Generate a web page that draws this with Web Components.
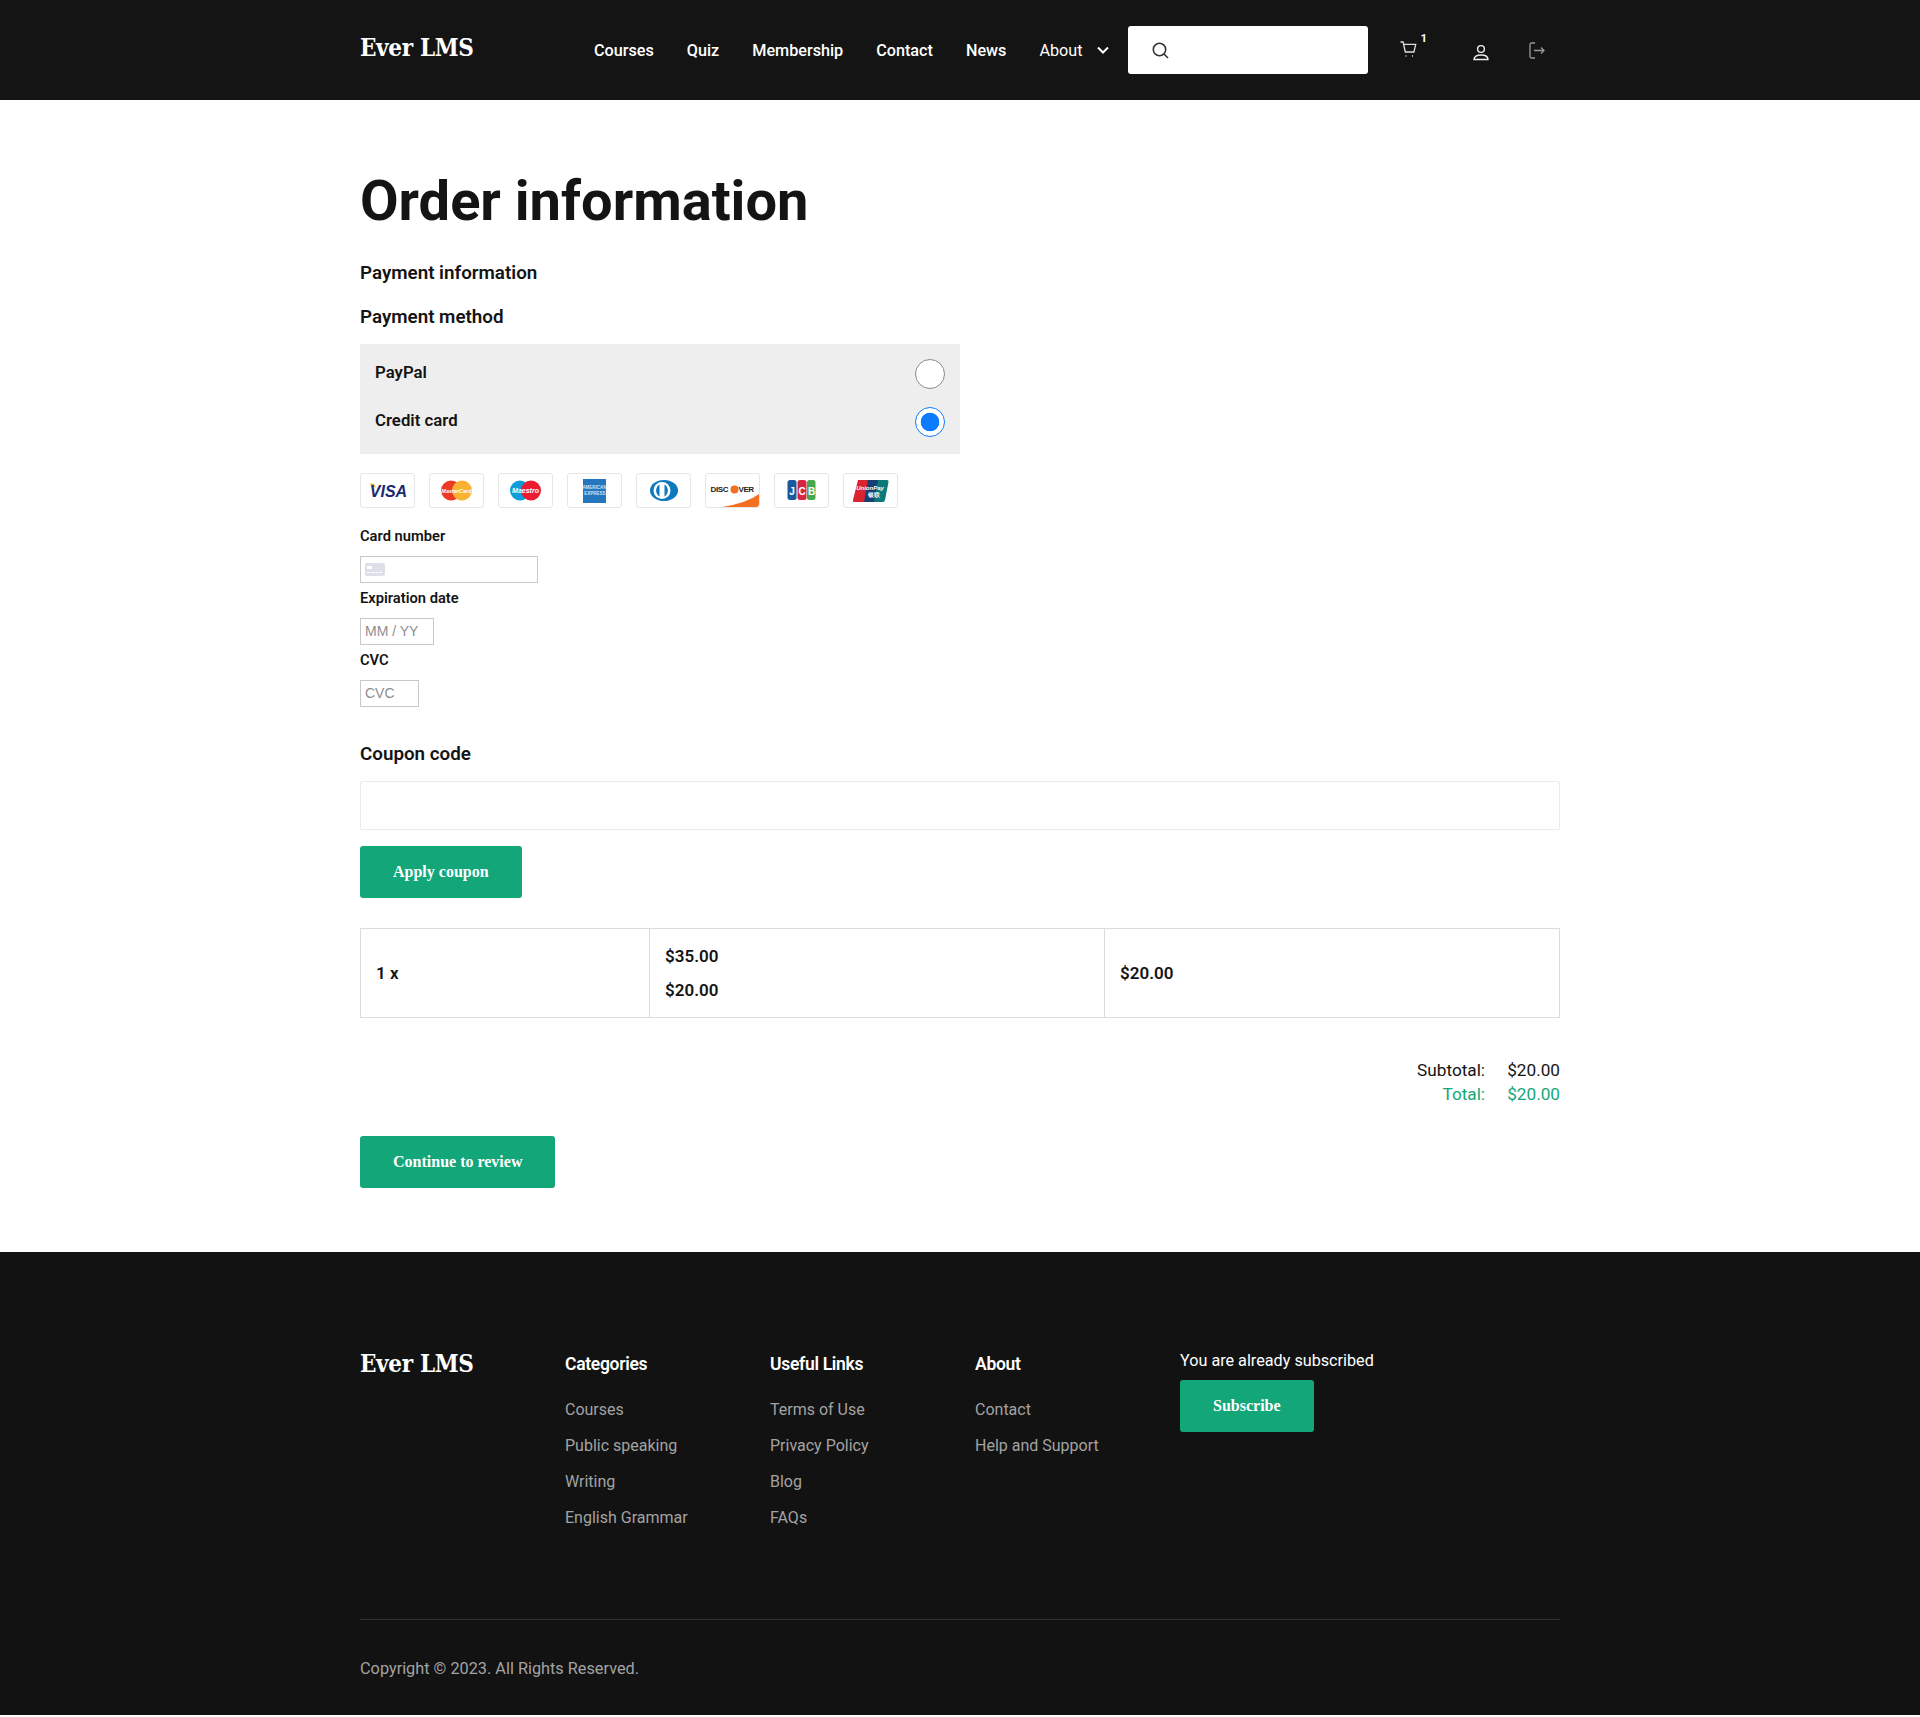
<!DOCTYPE html>
<html lang="en">
<head>
<meta charset="utf-8">
<title>Order information</title>
<style>
html, body { margin: 0; padding: 0; background: #fff; }
body { font-family: "Roboto", "Liberation Sans", sans-serif; color: #141414; padding-bottom: 2px; }
lms-header, lms-checkout, lms-footer { display: block; }
</style>
</head>
<body>
<lms-header></lms-header>
<lms-checkout></lms-checkout>
<lms-footer></lms-footer>

<script>
const SANS = '"Roboto", "Liberation Sans", sans-serif';
const SERIF = '"Liberation Serif", serif';
const SLAB = '"DejaVu Serif", "Liberation Serif", serif';

class LmsLogo extends HTMLElement {
    constructor() {
        super();
        this.attachShadow({ mode: 'open' });
        this.shadowRoot.innerHTML = `
            <style>
                :host { display: block; font: 700 24px/32px ${SLAB}; font-stretch: condensed; color: #fff; letter-spacing: -0.35px; }
            </style>
            Ever LMS`;
    }
}

class LmsHeader extends HTMLElement {
    constructor() {
        super();
        this.attachShadow({ mode: 'open' });
        const links = ['Courses', 'Quiz', 'Membership', 'Contact', 'News'];
        this.shadowRoot.innerHTML = `
            <style>
                :host { display: block; background: #141414; height: 100px; font-family: ${SANS}; }
                .inner { width: 1200px; height: 100px; margin: 0 auto; display: flex; align-items: center; }
                lms-logo { width: 234px; margin-top: -4px; }
                nav { display: flex; gap: 33px; align-items: center; color: #fff; font-size: 16.200px; font-weight: 500; }
                .about { display: flex; align-items: center; gap: 14px; font-weight: 400; }
                .search { width: 240px; height: 48px; background: #fff; border-radius: 3px; margin-left: 19px;
                    display: flex; align-items: center; padding-left: 24px; box-sizing: border-box; }
                .icons { display: flex; align-items: center; position: relative; }
                .cart { margin-left: 32px; position: relative; height: 18px; }
                .badge { position: absolute; left: 21px; top: -10px; font-size: 11.500px; font-weight: 700; color: #fff; }
                .user { margin-left: 56px; margin-top: 5px; }
                .out { margin-left: 40px; }
                svg { display: block; }
            </style>
            <div class="inner">
                <lms-logo></lms-logo>
                <nav>
                    ${links.map(l => `<span>${l}</span>`).join('')}
                    <span class="about">About
                        <svg width="12" height="8" viewBox="0 0 12 8" fill="none" stroke="#fff" stroke-width="2"><path d="M1 1.500l5 5 5-5"/></svg>
                    </span>
                </nav>
                <div class="search">
                    <svg width="17" height="17" viewBox="0 0 17 17" fill="none" stroke="#333" stroke-width="1.600"><circle cx="7.500" cy="7.500" r="6.200"/><path d="M12 12l4 4"/></svg>
                </div>
                <div class="icons">
                    <div class="cart">
                        <svg width="17" height="17" viewBox="0 0 17 17" fill="none" stroke="#ddd" stroke-width="1.300"><path d="M.5 1h2.600l2.200 10h8.600l1.800-7.600H3.700"/><path d="M5.500 15h1M12 15h1" stroke-width="1.600"/></svg>
                        <span class="badge">1</span>
                    </div>
                    <svg class="user" width="16" height="17" viewBox="0 0 16 17" fill="none" stroke="#eee" stroke-width="1.400"><circle cx="8" cy="5" r="3.400"/><path d="M1 15.500c0-3 3-4.500 7-4.500s7 1.500 7 4.500z"/></svg>
                    <svg class="out" width="16" height="17" viewBox="0 0 16 17" fill="none" stroke="#999" stroke-width="1.300"><path d="M6 1H2.500Q1 1 1 2.500v12Q1 16 2.500 16H6"/><path d="M5 8.500h10M12 5.500l3 3-3 3"/></svg>
                </div>
            </div>`;
    }
}

class LmsButton extends HTMLElement {
    constructor() {
        super();
        this.attachShadow({ mode: 'open' });
        this.shadowRoot.innerHTML = `
            <style>
                :host { display: inline-flex; height: 52px; align-items: center; padding: 0 33px; background: #13a679;
                    border-radius: 3px; color: #fff; font: 700 16px ${SERIF}; box-sizing: border-box; }
            </style>
            <slot></slot>`;
    }
}

class LmsRadio extends HTMLElement {
    constructor() {
        super();
        this.attachShadow({ mode: 'open' });
        this.shadowRoot.innerHTML = `
            <style>
                :host { display: flex; justify-content: space-between; align-items: center; height: 48px;
                    font-weight: 600; font-size: 16.800px; color: #141414; }
                .label { margin-top: -5px; }
                .dot { width: 30px; height: 30px; border-radius: 50%; background: #fff; border: 1px solid #8a8a8a; box-sizing: border-box; }
                :host([checked]) .dot { border-color: #0d7bff; background: radial-gradient(circle, #0d7bff 0 9px, #fff 9.600px); }
            </style>
            <span class="label"><slot></slot></span><span class="dot"></span>`;
    }
}

class LmsCardIcons extends HTMLElement {
    constructor() {
        super();
        this.attachShadow({ mode: 'open' });
        const t = 'font-family="Liberation Sans" font-weight="700"';
        const icons = [
            `<path d="M9 10.500l5 .3 2 4z" fill="#f7a823"/><text x="28.500" y="23.500" text-anchor="middle" ${t} font-style="italic" font-size="16" fill="#1a2a72">VISA</text>`,
            `<circle cx="22" cy="17.500" r="10" fill="#ec3a26"/><circle cx="33" cy="17.500" r="10" fill="#fbb231"/><text x="27.500" y="19.500" text-anchor="middle" ${t} font-style="italic" font-size="5.500" fill="#fff">MasterCard</text>`,
            `<circle cx="22" cy="17.500" r="10" fill="#0d9ddb"/><circle cx="33" cy="17.500" r="10" fill="#eb1c30"/><text x="27.500" y="20" text-anchor="middle" ${t} font-style="italic" font-size="7" fill="#fff">Maestro</text>`,
            `<rect x="16" y="6" width="23" height="24" fill="#2477bd"/><text x="27.500" y="16" text-anchor="middle" ${t} font-size="4.500" fill="#cfe2f2">AMERICAN</text><text x="28" y="22" text-anchor="middle" ${t} font-size="4.500" fill="#cfe2f2">EXPRESS</text>`,
            `<ellipse cx="28" cy="17.500" rx="14" ry="10.500" fill="#0f79bd"/><circle cx="26" cy="17.500" r="8.500" fill="#fff"/><path d="M23.500 11.500a7 7 0 0 0 0 12zM28.500 11.500a7 7 0 0 1 0 12z" fill="#0f79bd"/>`,
            `<path d="M17 34Q42 30 54 21v10q0 3-3 3z" fill="#f37021"/><text x="5.500" y="19" ${t} font-size="8" letter-spacing="-.4" fill="#222">DISC</text><circle cx="29.500" cy="16.500" r="4" fill="#f37021"/><text x="33.500" y="19" ${t} font-size="8" letter-spacing="-.4" fill="#222">VER</text>`,
            `<rect x="13.500" y="7" width="9" height="20" rx="2.500" fill="#1a5b9f"/><rect x="23.500" y="7" width="9" height="20" rx="2.500" fill="#d5263f"/><rect x="33" y="7" width="8.500" height="20" rx="2.500" fill="#46a84a"/><text x="18" y="22" text-anchor="middle" ${t} font-size="10" fill="#fff">J</text><text x="28" y="22" text-anchor="middle" ${t} font-size="10" fill="#fff">C</text><text x="37.500" y="22" text-anchor="middle" ${t} font-size="10" fill="#fff">B</text>`,
            `<path d="M15 7h13l-4 22H11q-1.500 0-1-2z" fill="#d9232e"/><path d="M25 7h13l-4 22H21z" fill="#163f73"/><path d="M35 7h9q2 0 1.500 2L42 27q-.5 2-2 2h-9z" fill="#0c7a78"/><text x="27" y="17" text-anchor="middle" ${t} font-style="italic" font-size="6" fill="#fff">UnionPay</text><text x="31" y="24" text-anchor="middle" ${t} font-size="5.500" fill="#fff">银联</text>`
        ];
        this.shadowRoot.innerHTML = `
            <style>
                :host { display: flex; gap: 14px; }
                svg { display: block; width: 55px; height: 35px; border: 1px solid #e6e6e6; border-radius: 3px; box-sizing: border-box; background: #fff; }
            </style>
            ${icons.map(i => `<svg viewBox="1 1 53 33">${i}</svg>`).join('')}`;
    }
}

class LmsField extends HTMLElement {
    constructor() {
        super();
        this.attachShadow({ mode: 'open' });
        this.shadowRoot.innerHTML = `
            <style>
                :host { display: block; }
                .label { display: block; font-size: 14.700px; font-weight: 600; line-height: 18px; margin-bottom: 11px; color: #141414; }
                .box { height: 27px; box-sizing: border-box; border: 1px solid #c8c8c8; display: flex; align-items: center;
                    padding: 0 0 2px 4px; font: 14px "Liberation Sans", sans-serif; color: #8e8e8e; }
            </style>
            <span class="label"></span>
            <div class="box"><slot></slot></div>`;
    }
    connectedCallback() {
        this.shadowRoot.querySelector('.label').textContent = this.getAttribute('label');
        this.shadowRoot.querySelector('.box').style.width = this.getAttribute('width') + 'px';
    }
}

class LmsCheckout extends HTMLElement {
    constructor() {
        super();
        this.attachShadow({ mode: 'open' });
        this.shadowRoot.innerHTML = `
            <style>
                :host { display: block; height: 1152px; box-sizing: border-box; font-family: ${SANS}; color: #141414; }
                .wrap { width: 1200px; margin: 0 auto; padding-top: 67px; }
                h1 { margin: 0; font-size: 56px; line-height: 68px; font-weight: 700; }
                h2 { margin: 0; font-size: 18.800px; line-height: 24px; font-weight: 600; }
                .pay { margin-top: 26px; }
                .method { margin-top: 20px; }
                .methods { width: 600px; height: 110px; box-sizing: border-box; background: #eee; margin-top: 15px;
                    padding: 6px 15px 0; display: flex; flex-direction: column; }
                lms-card-icons { margin-top: 19px; }
                .fields { margin-top: 19px; display: flex; flex-direction: column; gap: 6px; }
                .chip { display: block; margin-top: 2px; }
                .coupon-title { margin-top: 35px; }
                .coupon { height: 49px; border: 1px solid #ebebeb; border-radius: 2px; box-sizing: border-box; margin-top: 15px; }
                .apply { margin-top: 16px; }
                table { width: 1200px; height: 90px; margin-top: 30px; border-collapse: collapse; table-layout: fixed; font-size: 17px; font-weight: 600; }
                td { border: 1px solid #dcdcdc; padding: 0 15px; }
                td p { margin: 0; line-height: 34px; }
                .totals { margin-top: 40px; display: grid; grid-template-columns: auto 75px; justify-content: end; text-align: right;
                    font-size: 17.200px; line-height: 24px; font-weight: 400; }
                .green { color: #13a679; }
                .continue { margin-top: 30px; }
            </style>
            <div class="wrap">
                <h1>Order information</h1>
                <h2 class="pay">Payment information</h2>
                <h2 class="method">Payment method</h2>
                <div class="methods">
                    <lms-radio>PayPal</lms-radio>
                    <lms-radio checked>Credit card</lms-radio>
                </div>
                <lms-card-icons></lms-card-icons>
                <div class="fields">
                    <lms-field label="Card number" width="178">
                        <svg class="chip" width="20" height="13" viewBox="0 0 20 13"><rect width="20" height="13" rx="2" fill="#dde0e8"/><rect x="2" y="3" width="5" height="3" fill="#fff"/><path d="M2 9.500h16" stroke="#fff" stroke-dasharray="3 1"/></svg>
                    </lms-field>
                    <lms-field label="Expiration date" width="74">MM / YY</lms-field>
                    <lms-field label="CVC" width="59">CVC</lms-field>
                </div>
                <h2 class="coupon-title">Coupon code</h2>
                <div class="coupon"></div>
                <lms-button class="apply">Apply coupon</lms-button>
                <table>
                    <colgroup><col style="width:289px"><col style="width:455px"><col></colgroup>
                    <tr><td>1 x</td><td><p>$35.00</p><p>$20.00</p></td><td>$20.00</td></tr>
                </table>
                <div class="totals">
                    <span>Subtotal:</span><span>$20.00</span>
                    <span class="green">Total:</span><span class="green">$20.00</span>
                </div>
                <lms-button class="continue">Continue to review</lms-button>
            </div>`;
    }
}

class LmsFooterColumn extends HTMLElement {
    constructor() {
        super();
        this.attachShadow({ mode: 'open' });
        const items = (this.getAttribute('items') || '').split('|');
        this.shadowRoot.innerHTML = `
            <style>
                :host { display: block; }
                h4 { margin: 0 0 16px; font-size: 17.500px; line-height: 24px; font-weight: 600; color: #fff; letter-spacing: -0.3px; }
                a { display: block; line-height: 36px; font-size: 16px; color: #a3a3a3; }
            </style>
            <h4>${this.getAttribute('title')}</h4>
            ${items.map(i => `<a>${i}</a>`).join('')}`;
    }
}

class LmsFooter extends HTMLElement {
    constructor() {
        super();
        this.attachShadow({ mode: 'open' });
        this.shadowRoot.innerHTML = `
            <style>
                :host { display: block; background: #121212; height: 463px; font-family: ${SANS}; }
                .wrap { width: 1200px; margin: 0 auto; padding-top: 100px; }
                .cols { display: grid; grid-template-columns: repeat(4, 205px) 1fr; height: 267px; border-bottom: 1px solid #2e3338; }
                .cols lms-logo { margin-top: -4px; }
                .sub { color: #fff; font-size: 16.200px; margin-top: -3px; line-height: 24px; }
                lms-button { margin-top: 7px; }
                .copy { color: #a3a3a3; font-size: 16.300px; line-height: 24px; margin-top: 37px; }
            </style>
            <div class="wrap">
                <div class="cols">
                    <lms-logo></lms-logo>
                    <lms-footer-column title="Categories" items="Courses|Public speaking|Writing|English Grammar"></lms-footer-column>
                    <lms-footer-column title="Useful Links" items="Terms of Use|Privacy Policy|Blog|FAQs"></lms-footer-column>
                    <lms-footer-column title="About" items="Contact|Help and Support"></lms-footer-column>
                    <div><div class="sub">You are already subscribed</div><lms-button>Subscribe</lms-button></div>
                </div>
                <div class="copy">Copyright © 2023. All Rights Reserved.</div>
            </div>`;
    }
}

customElements.define('lms-logo', LmsLogo);
customElements.define('lms-header', LmsHeader);
customElements.define('lms-button', LmsButton);
customElements.define('lms-radio', LmsRadio);
customElements.define('lms-card-icons', LmsCardIcons);
customElements.define('lms-field', LmsField);
customElements.define('lms-footer-column', LmsFooterColumn);
customElements.define('lms-footer', LmsFooter);
customElements.define('lms-checkout', LmsCheckout);
</script>
</body>
</html>
